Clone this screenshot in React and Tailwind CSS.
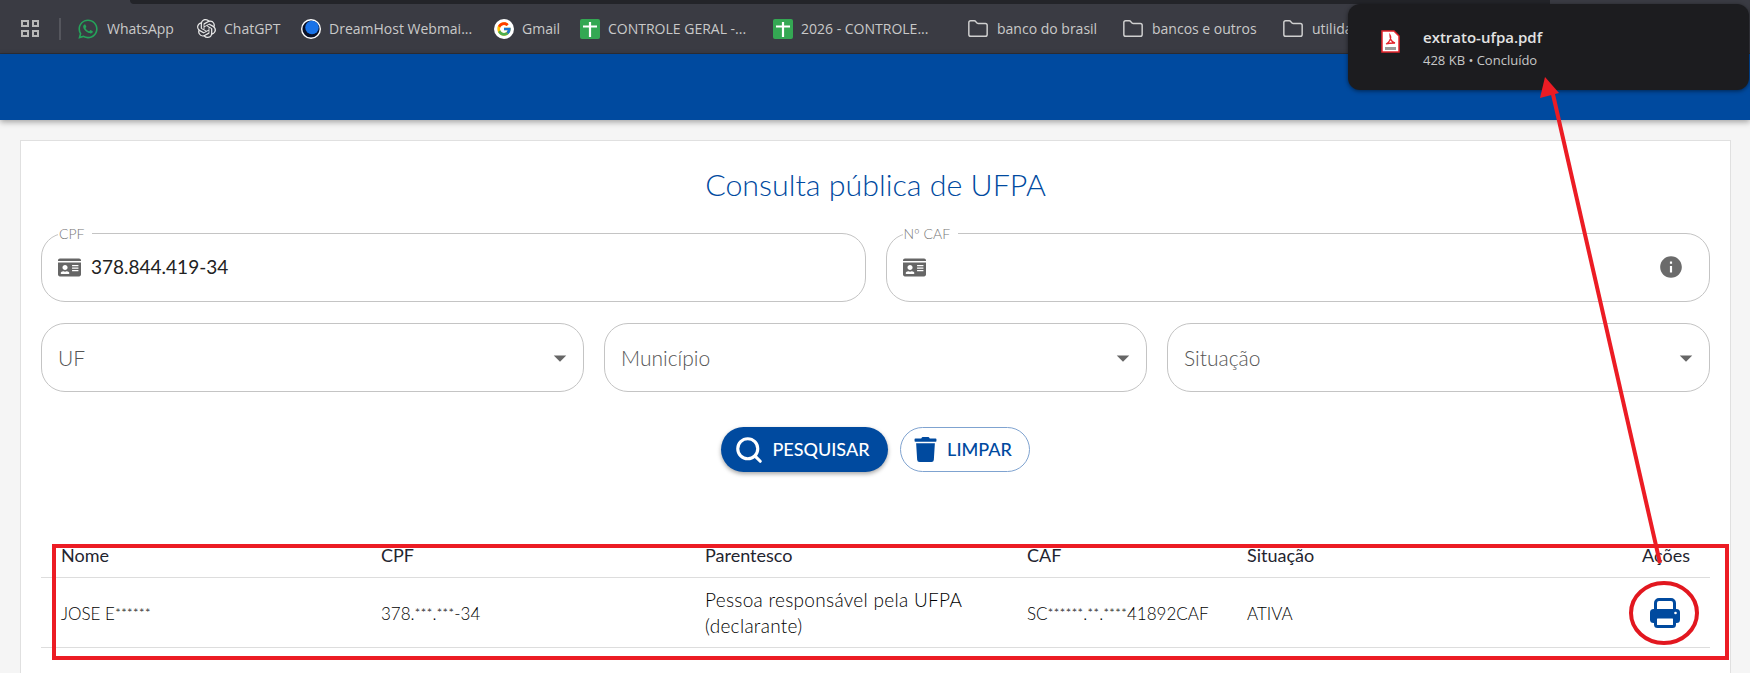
import React from 'react';
import { FaWhatsapp, FaIdCard, FaTrash } from 'react-icons/fa';
import { FcGoogle } from 'react-icons/fc';
import { SiOpenai } from 'react-icons/si';
import { MdInfo, MdArrowDropDown } from 'react-icons/md';
import { Folder, Search } from 'lucide-react';

const SheetIcon = () => (
  <svg width="20" height="20" viewBox="0 0 20 20" className="shrink-0">
    <rect width="20" height="20" rx="2" fill="#34a853" />
    <path d="M10 3v15M3 7.5h14" stroke="#fff" strokeWidth="2.2" />
  </svg>
);

const DreamIcon = () => (
  <svg width="20" height="20" viewBox="0 0 20 20" className="shrink-0">
    <circle cx="10" cy="10" r="10" fill="#fff" />
    <circle cx="10" cy="10" r="8.6" fill="#0a1128" />
    <circle cx="11" cy="8.5" r="6.8" fill="#1a73e8" />
  </svg>
);

const PrintIcon = () => (
  <svg width="30" height="30" viewBox="0 0 30 30" className="shrink-0">
    <path d="M5.5 12V5a3.5 3.5 0 0 1 3.5-3.5h12A3.5 3.5 0 0 1 24.500 5v7" fill="none" stroke="#004a9f" strokeWidth="3" />
    <rect x="0" y="11" width="30" height="14" rx="3.500" fill="#004a9f" />
    <rect x="5.500" y="19" width="19" height="9.500" rx="2" fill="#fff" stroke="#004a9f" strokeWidth="3" />
    <circle cx="25.500" cy="15" r="1.300" fill="#fff" />
  </svg>
);

const Bookmark = ({ icon, label, className }) => (
  <div className={`flex items-center gap-2 shrink-0 ${className}`}>
    {icon}
    <span className="whitespace-nowrap">{label}</span>
  </div>
);

// masked characters show up small and raised in the table
const Stars = ({ n }) => (
  <span className="text-[14px] leading-none align-[2px]">{'*'.repeat(n)}</span>
);

const OutlinedInput = ({ label, value, info }) => (
  <fieldset className="h-[74px] -mt-[5px] border border-[#c4c4c4] rounded-[24px] pl-[16px] pr-[15px] flex-1">
    <legend className="px-[1px] pr-2 text-[14px] leading-[11px] font-light text-[#777]">{label}</legend>
    <div className="flex items-center h-[57px] gap-[10px]">
      <FaIdCard className="text-[#666] text-[23px] shrink-0" />
      <span className="text-[19px] text-[#222] flex-1">{value}</span>
      {info && <MdInfo className="text-[#6b6b6b] text-[26px] mr-[10px] -mt-[2px]" />}
    </div>
  </fieldset>
);

const SelectBox = ({ label }) => (
  <div className="flex-1 h-[69px] border border-[#c4c4c4] rounded-[24px] pl-[16px] pr-[8px] flex items-center justify-between">
    <span className="text-[21px] font-light text-[#555]">{label}</span>
    <MdArrowDropDown className="text-[#666] text-[30px]" />
  </div>
);

const cols = 'grid grid-cols-[320px_324px_322px_220px_1fr_auto] px-[20px]';

export default function App() {
  return (
    <div className="relative w-[1750px] h-[673px] overflow-hidden bg-[#f5f5f5] font-['Lato',sans-serif]">
      {/* chrome bookmarks */}
      <div className="h-[54px] bg-[#3a3b43] border-b border-[#2e2f35] flex flex-col font-['Open_Sans',sans-serif] text-[14px] text-[#c9c9c9]">
        <div className="h-[4px] ml-[130px] mr-[200px] bg-[#232429] rounded-bl-[8px] shrink-0" />
        <div className="flex items-center h-[49px] pl-[21px] overflow-hidden">
          <div className="grid grid-cols-2 gap-[3px] w-[18px] shrink-0">
            <div className="h-[7px] border-2 border-[#b8b8b8]" />
            <div className="h-[7px] border-2 border-[#b8b8b8]" />
            <div className="h-[7px] border-2 border-[#b8b8b8]" />
            <div className="h-[7px] border-2 border-[#b8b8b8]" />
          </div>
          <div className="w-[2px] h-[22px] bg-[#55565d] ml-[20px] mr-[16px] shrink-0" />
          <Bookmark icon={<FaWhatsapp className="text-[#25a35a] text-[22px]" />} label="WhatsApp" className="w-[120px]" />
          <Bookmark icon={<SiOpenai className="text-[#e8e8e8] text-[19px]" />} label="ChatGPT" className="w-[104px]" />
          <Bookmark icon={<DreamIcon />} label="DreamHost Webmai..." className="w-[193px]" />
          <Bookmark icon={<span className="bg-white rounded-full w-[20px] h-[20px] flex items-center justify-center"><FcGoogle className="text-[16px]" /></span>} label="Gmail" className="w-[86px]" />
          <Bookmark icon={<SheetIcon />} label="CONTROLE GERAL -..." className="w-[193px]" />
          <Bookmark icon={<SheetIcon />} label="2026 - CONTROLE..." className="w-[194px]" />
          <Bookmark icon={<Folder className="text-[#d0d0d0]" size={22} strokeWidth={1.6} />} label="banco do brasil" className="w-[155px]" />
          <Bookmark icon={<Folder className="text-[#d0d0d0]" size={22} strokeWidth={1.6} />} label="bancos e outros" className="w-[160px]" />
          <Bookmark icon={<Folder className="text-[#d0d0d0]" size={22} strokeWidth={1.6} />} label="utilidades" />
        </div>
      </div>

      {/* site header */}
      <div className="h-[66px] bg-[#004a9f] shadow-[0_2px_6px_rgba(0,0,0,0.35)]" />

      {/* card */}
      <div className="mt-[20px] ml-[20px] w-[1711px] h-[600px] bg-white border border-[#e0e0e0] px-[20px]">
        <h1 className="text-[30.4px] leading-[36px] font-light text-[#004a9f] text-center mt-[25px] mb-[31px]">Consulta pública de UFPA</h1>

        <div className="flex gap-[20px]">
          <OutlinedInput label="CPF" value="378.844.419-34" />
          <OutlinedInput label="Nº CAF" value="" info />
        </div>

        <div className="flex gap-[20px] mt-[21px]">
          <SelectBox label="UF" />
          <SelectBox label="Município" />
          <SelectBox label="Situação" />
        </div>

        <div className="flex justify-center gap-[12px] mt-[35px] text-[18px] font-medium">
          <button className="w-[167px] h-[45px] rounded-full bg-[#004a9f] text-white flex items-center justify-center gap-[8px] pr-[5px] shadow-[0_2px_4px_rgba(0,0,0,0.35)]">
            <Search size={30} strokeWidth={2.5} />
            PESQUISAR
          </button>
          <button className="w-[130px] h-[45px] rounded-full border border-[#7fa3d0] text-[#004a9f] flex items-center justify-center gap-[9px] pr-[5px]">
            <FaTrash className="text-[25px]" />
            LIMPAR
          </button>
        </div>

        <div className="mt-[62px] text-[17px] text-[#1f2530]">
          <div className={`${cols} h-[44px] items-center border-b border-[#dddddd] text-[18px]`}>
            <div>Nome</div>
            <div>CPF</div>
            <div>Parentesco</div>
            <div>CAF</div>
            <div>Situação</div>
            <div className="text-right">Ações</div>
          </div>
          <div className={`${cols} h-[70px] items-center border-b border-[#dddddd] font-light text-black`}>
            <div className="pt-[2px]">JOSE E<Stars n={6} /></div>
            <div className="pt-[2px]">378.<Stars n={3} />.<Stars n={3} />-34</div>
            <div className="leading-[26px] w-[300px] text-[19px] tracking-[0.3px]">Pessoa responsável pela UFPA (declarante)</div>
            <div className="pt-[2px]">SC<Stars n={6} />.<Stars n={2} />.<Stars n={4} />41892CAF</div>
            <div className="pt-[2px]">ATIVA</div>
            <div className="flex justify-end pr-[10px]"><PrintIcon /></div>
          </div>
        </div>
      </div>

      {/* download bubble */}
      <div className="absolute left-[1348px] top-[4px] w-[401px] h-[86px] bg-[#1c1c1f] rounded-[12px] shadow-[0_1px_4px_rgba(0,0,0,0.5)] flex items-start pl-[33px] gap-[23px] font-['Open_Sans',sans-serif]">
        <svg width="19" height="23" viewBox="0 0 19 23" className="shrink-0 mt-[26px]">
          <path d="M1 1h12l5 5v16H1z" fill="#fff" stroke="#e3262e" strokeWidth="1.500" />
          <path d="M5 14c3-1 6-6 4-9 0 4 2 7 5 8-3 0-6 0-9 1z" fill="none" stroke="#e3262e" strokeWidth="1.300" />
          <rect x="4" y="17" width="11" height="3" fill="#9a9a9a" />
        </svg>
        <div className="flex flex-col gap-[4px] pt-[23px]">
          <span className="text-[15px] font-semibold text-[#e3e3e3] leading-[20px]">extrato-ufpa.pdf</span>
          <span className="text-[13px] text-[#c7c7c7] leading-[18px]">428 KB • Concluído</span>
        </div>
      </div>

      {/* red annotations */}
      <svg width="1750" height="673" className="absolute inset-0 pointer-events-none">
        <rect x="54" y="546" width="1673" height="112" fill="none" stroke="#ec1c24" strokeWidth="4" />
        <ellipse cx="1664" cy="613" rx="33" ry="30" fill="none" stroke="#e2171f" strokeWidth="4" />
        <line x1="1660" y1="563" x2="1552" y2="90" stroke="#ec1c24" strokeWidth="4" />
        <polygon points="1545,77 1540,98 1559,93" fill="#ec1c24" />
      </svg>
    </div>
  );
}
